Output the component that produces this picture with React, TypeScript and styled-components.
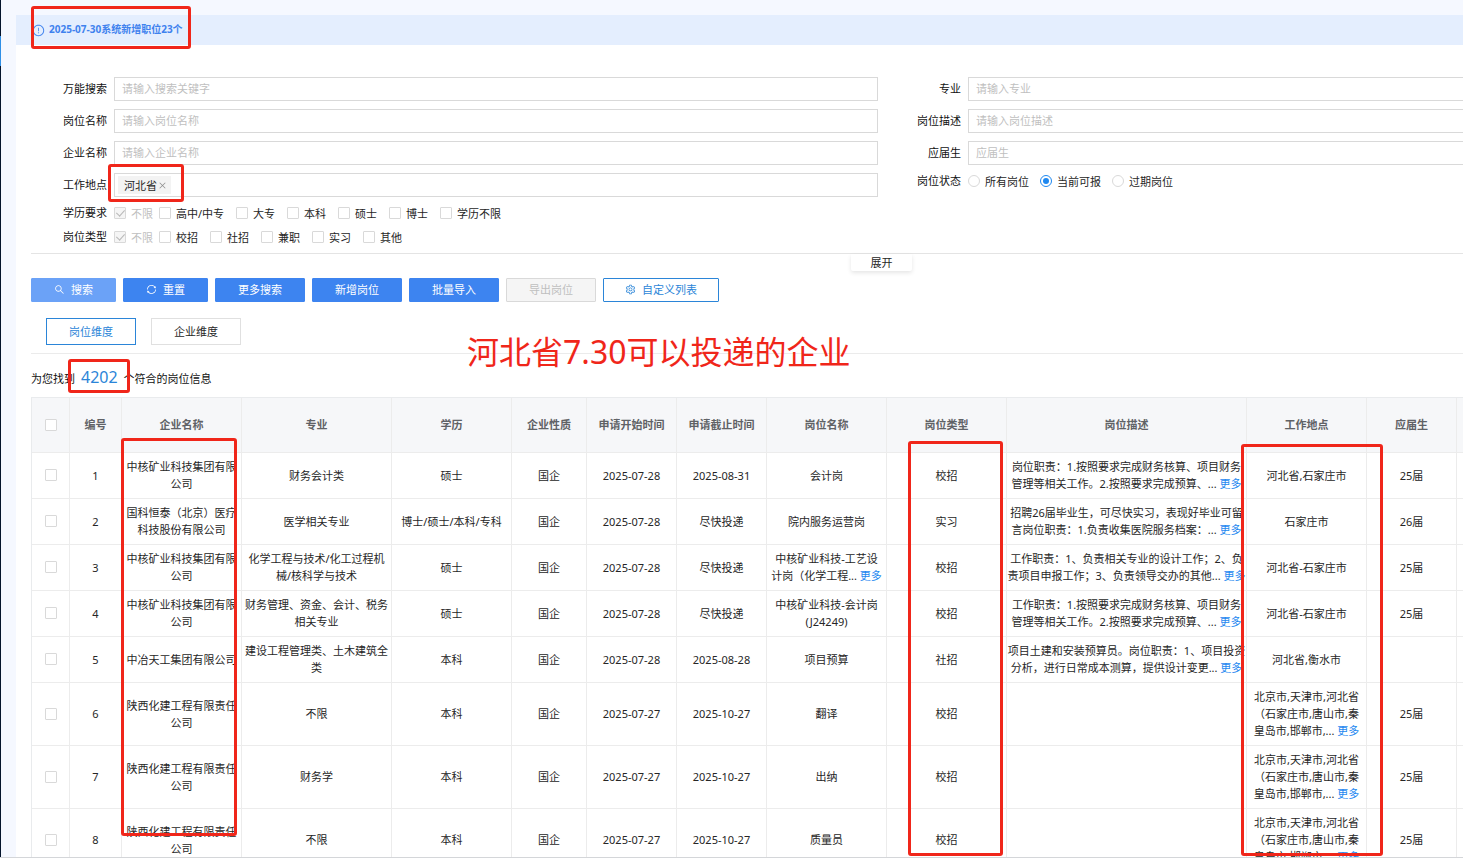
import React from 'react';
import styled, { createGlobalStyle, css } from 'styled-components';
import {
  AiOutlineClose,
  AiOutlineExclamationCircle,
  AiOutlineSearch,
  AiOutlineSetting,
  AiOutlineSync,
} from 'react-icons/ai';

const GlobalStyle = createGlobalStyle`
  * { box-sizing: border-box; }
  body {
    margin: 0;
    background: #f5f8ff;
    color: #262626;
    font-family: "Noto Sans", "Noto Sans CJK SC", sans-serif;
    font-size: 11px;
    line-height: 17px;
  }
  button, input { font: inherit; color: inherit; }
`;

const Shell = styled.div`
  position: relative;
  display: flex;
  height: 100vh;
  overflow: hidden;
  border-bottom: 1px solid #d4d6d9;
`;

const Rail = styled.nav`
  flex: 0 0 1px;
  padding-top: 36px;
  background: #04142b;
`;

const RailActive = styled.div`
  height: 30px;
  background: #2f8fe6;
`;

const Main = styled.main`
  flex: 1;
  min-width: 0;
  padding: 15px 0 0 15px;
  overflow: hidden;
`;

const Panel = styled.div`
  min-width: 1731px;
  background: #fff;
`;

const Notice = styled.div`
  display: flex;
  align-items: center;
  gap: 4px;
  height: 30px;
  padding: 0 16px;
  background: #e4eefe;
  color: #3f82ee;
  font-size: 10px;
  font-weight: 700;

  svg { width: 13px; height: 13px; }
`;

const NoticeText = styled.span`
  padding-bottom: 2px;
`;

const Content = styled.div`
  padding: 28px 15px 0;
`;

const Form = styled.form`
  display: grid;
  grid-template-columns: 1fr 1fr;
  column-gap: 7px;
  padding-bottom: 4px;
  border-bottom: 1px solid #e4e4e4;
`;

const FormColumn = styled.div`
  display: flex;
  flex-direction: column;
`;

const Field = styled.div<{ $choice?: boolean }>`
  display: grid;
  grid-template-columns: 76px 1fr;
  column-gap: 7px;
  align-items: center;
  height: ${(p) => (p.$choice ? 24 : 32)}px;
`;

const labelText = css`
  padding-bottom: 1px;
  color: #111;
  text-align: right;
  white-space: nowrap;
`;
const Label = styled.label`${labelText}`;
const GroupLabel = styled.span`${labelText}`;

const TextInput = styled.input`
  width: 100%;
  height: 24px;
  padding: 0 7px 2px;
  border: 1px solid #d9d9d9;
  background: #fff;
  outline: none;

  &::placeholder { color: #bfbfbf; opacity: 1; }
`;

const TagBox = styled.div`
  display: flex;
  align-items: center;
  height: 24px;
  padding: 0 3px;
  border: 1px solid #d9d9d9;
`;

const Tag = styled.span`
  display: flex;
  align-items: center;
  gap: 1px;
  height: 18px;
  padding: 0 4px 0 6px;
  background: #f3f3f3;
`;

const TagClose = styled.button`
  display: flex;
  padding: 0;
  border: 0;
  background: none;
  color: #8c8c8c;

  svg { width: 9px; height: 9px; }
`;

const TagInput = styled.input`
  flex: 1;
  min-width: 0;
  border: 0;
  background: none;
  outline: none;
`;

const Choices = styled.div<{ $gap: number }>`
  display: flex;
  align-items: center;
  gap: ${(p) => p.$gap}px;
`;

const Choice = styled.label<{ $muted?: boolean }>`
  display: flex;
  align-items: center;
  gap: 5px;
  white-space: nowrap;
  color: ${(p) => (p.$muted ? '#bfbfbf' : '#262626')};
  margin-right: ${(p) => (p.$muted ? -6 : 0)}px;
`;

const Checkbox = styled.input.attrs({ type: 'checkbox' })`
  appearance: none;
  display: grid;
  place-items: center;
  width: 12px;
  height: 12px;
  margin: 0;
  border: 1px solid #d9d9d9;
  border-radius: 1px;
  background: #fff;

  &:disabled { background: #f5f5f5; }
  &:checked::after {
    content: '';
    width: 4px;
    height: 7px;
    margin-bottom: 2px;
    border: solid #b8b8b8;
    border-width: 0 1px 1px 0;
    transform: rotate(42deg);
  }
`;

const Radio = styled.input.attrs({ type: 'radio' })`
  appearance: none;
  display: grid;
  place-items: center;
  width: 12px;
  height: 12px;
  margin: 0;
  border: 1px solid #d9d9d9;
  border-radius: 50%;
  background: #fff;

  &:checked { border-color: #1e88f0; }
  &:checked::after {
    content: '';
    width: 6px;
    height: 6px;
    border-radius: 50%;
    background: #1e88f0;
  }
`;

const ExpandRow = styled.div`
  display: flex;
  justify-content: center;
`;

const ExpandButton = styled.button`
  width: 61px;
  height: 17px;
  padding: 0;
  border: 0;
  border-radius: 0 0 2px 2px;
  background: #fff;
  box-shadow: 0 2px 4px rgba(0, 0, 0, 0.1);
  line-height: 17px;
`;

const Actions = styled.div`
  display: flex;
  gap: 7px;
  padding-top: 7px;
`;

type Tone = 'soft' | 'primary' | 'disabled' | 'outline';

const tones = {
  soft: css`border-color: #6ba2f7; background: #6ba2f7; color: #fff;`,
  primary: css`border-color: #3d84f0; background: #3d84f0; color: #fff;`,
  disabled: css`border-color: #d9d9d9; background: #f5f5f5; color: #bfbfbf;`,
  outline: css`border-color: #2b85d8; background: #fff; color: #2b85d8;`,
};

const ActionButton = styled.button<{ $tone: Tone; $width: number }>`
  display: flex;
  align-items: center;
  justify-content: center;
  gap: 6px;
  width: ${(p) => p.$width}px;
  height: 24px;
  padding: 0 0 2px;
  border: 1px solid;
  border-radius: 1px;
  white-space: nowrap;
  ${(p) => tones[p.$tone]}

  svg { width: 11px; height: 11px; }
`;

const Tabs = styled.div`
  display: flex;
  gap: 15px;
  padding: 16px 15px 8px;
  border-bottom: 1px solid #ebebeb;
`;

const Tab = styled.button<{ $active?: boolean }>`
  width: 90px;
  height: 27px;
  padding: 0;
  border: 1px solid ${(p) => (p.$active ? '#2b85d8' : '#e0e0e0')};
  background: #fff;
  color: ${(p) => (p.$active ? '#2b85d8' : '#262626')};
`;

const Summary = styled.p`
  display: flex;
  align-items: baseline;
  height: 43px;
  margin: 0;
  padding-top: 11px;
  color: #111;
  line-height: 24px;
`;

const Count = styled.span`
  padding: 0 6px;
  color: #2b85d8;
  font-size: 16px;
`;

const Table = styled.table`
  width: 100%;
  table-layout: fixed;
  border-collapse: separate;
  border-spacing: 0;
  border: solid #e9ebed;
  border-width: 1px 0 0 1px;
`;

const cell = css`
  padding: 5px 0 6px;
  border: solid #ececec;
  border-width: 0 1px 1px 0;
  text-align: center;
  vertical-align: middle;
  white-space: nowrap;
`;

const HeadCell = styled.th`
  ${cell}
  height: 55px;
  background: #f6f7f9;
  color: #606266;
  font-weight: 600;
`;

const Cell = styled.td`
  ${cell}
  height: 46px;

  input { margin: 0 auto; }
`;

const HeadCheck = styled(Checkbox)`
  margin: 0 auto;
`;

const Line = styled.div``;

const More = styled.a`
  color: #1e88f0;
  text-decoration: none;
`;

const Marker = styled.div<{ $x: number; $y: number; $w: number; $h: number }>`
  position: absolute;
  left: ${(p) => p.$x}px;
  top: ${(p) => p.$y}px;
  width: ${(p) => p.$w}px;
  height: ${(p) => p.$h}px;
  border: 3px solid #f0261a;
  border-radius: 3px;
  pointer-events: none;
`;

const Caption = styled.div`
  position: absolute;
  left: 467px;
  top: 330px;
  color: #f0261a;
  font-size: 32px;
  line-height: 44px;
  white-space: nowrap;
  pointer-events: none;
`;

const columns: { title: string; width?: number }[] = [
  { title: '编号', width: 52 },
  { title: '企业名称', width: 120 },
  { title: '专业', width: 150 },
  { title: '学历', width: 120 },
  { title: '企业性质', width: 75 },
  { title: '申请开始时间', width: 90 },
  { title: '申请截止时间', width: 90 },
  { title: '岗位名称', width: 120 },
  { title: '岗位类型', width: 120 },
  { title: '岗位描述', width: 240 },
  { title: '工作地点', width: 120 },
  { title: '应届生', width: 90 },
];

// A line break splits a cell's text; a trailing "…" marks shortened text with a link to the rest.
const zhonghe = '中核矿业科技集团有限\n公司';
const shanxi = '陕西化建工程有限责任\n公司';
const cities = '北京市,天津市,河北省\n（石家庄市,唐山市,秦\n皇岛市,邯郸市,…';
const finance = '1.按照要求完成财务核算、项目财务\n管理等相关工作。2.按照要求完成预算、…';

const rows: string[][] = [
  ['1', zhonghe, '财务会计类', '硕士', '国企', '2025-07-28', '2025-08-31', '会计岗', '校招', `岗位职责：${finance}`, '河北省,石家庄市', '25届'],
  ['2', '国科恒泰（北京）医疗\n科技股份有限公司', '医学相关专业', '博士/硕士/本科/专科', '国企', '2025-07-28', '尽快投递', '院内服务运营岗', '实习', '招聘26届毕业生，可尽快实习，表现好毕业可留\n言岗位职责：1.负责收集医院服务档案：…', '石家庄市', '26届'],
  ['3', zhonghe, '化学工程与技术/化工过程机\n械/核科学与技术', '硕士', '国企', '2025-07-28', '尽快投递', '中核矿业科技-工艺设\n计岗（化学工程…', '校招', '工作职责：1、负责相关专业的设计工作；2、负\n责项目申报工作；3、负责领导交办的其他…', '河北省-石家庄市', '25届'],
  ['4', zhonghe, '财务管理、资金、会计、税务\n相关专业', '硕士', '国企', '2025-07-28', '尽快投递', '中核矿业科技-会计岗\n(J24249)', '校招', `工作职责：${finance}`, '河北省-石家庄市', '25届'],
  ['5', '中冶天工集团有限公司', '建设工程管理类、土木建筑全\n类', '本科', '国企', '2025-07-28', '2025-08-28', '项目预算', '社招', '项目土建和安装预算员。岗位职责：1、项目投资\n分析，进行日常成本测算，提供设计变更…', '河北省,衡水市', ''],
  ['6', shanxi, '不限', '本科', '国企', '2025-07-27', '2025-10-27', '翻译', '校招', '', cities, '25届'],
  ['7', shanxi, '财务学', '本科', '国企', '2025-07-27', '2025-10-27', '出纳', '校招', '', cities, '25届'],
  ['8', shanxi, '不限', '本科', '国企', '2025-07-27', '2025-10-27', '质量员', '校招', '', cities, '25届'],
];

function CellText({ text }: { text: string }) {
  return (
    <>
      {text.split('\n').map((line, i) =>
        line.endsWith('…') ? (
          <Line key={i}>
            {line.slice(0, -1)}... <More href="#more">更多</More>
          </Line>
        ) : (
          <Line key={i}>{line}</Line>
        ),
      )}
    </>
  );
}

function InputField({ id, label, placeholder }: { id: string; label: string; placeholder: string }) {
  return (
    <Field>
      <Label htmlFor={id}>{label}</Label>
      <TextInput id={id} placeholder={placeholder} />
    </Field>
  );
}

function CheckField({ label, options }: { label: string; options: string[] }) {
  return (
    <Field $choice role="group" aria-label={label}>
      <GroupLabel>{label}</GroupLabel>
      <Choices $gap={12}>
        <Choice $muted>
          <Checkbox defaultChecked disabled />
          不限
        </Choice>
        {options.map((option) => (
          <Choice key={option}>
            <Checkbox />
            {option}
          </Choice>
        ))}
      </Choices>
    </Field>
  );
}

export default function App() {
  return (
    <Shell>
      <GlobalStyle />
      <Rail>
        <RailActive />
      </Rail>
      <Main>
        <Panel>
          <Notice>
            <AiOutlineExclamationCircle />
            <NoticeText>2025-07-30系统新增职位23个</NoticeText>
          </Notice>
          <Content>
            <Form onSubmit={(e) => e.preventDefault()}>
              <FormColumn>
                <InputField id="keyword" label="万能搜索" placeholder="请输入搜索关键字" />
                <InputField id="post" label="岗位名称" placeholder="请输入岗位名称" />
                <InputField id="company" label="企业名称" placeholder="请输入企业名称" />
                <Field>
                  <Label htmlFor="place">工作地点</Label>
                  <TagBox>
                    <Tag>
                      河北省
                      <TagClose type="button" aria-label="移除河北省">
                        <AiOutlineClose />
                      </TagClose>
                    </Tag>
                    <TagInput id="place" />
                  </TagBox>
                </Field>
                <CheckField label="学历要求" options={['高中/中专', '大专', '本科', '硕士', '博士', '学历不限']} />
                <CheckField label="岗位类型" options={['校招', '社招', '兼职', '实习', '其他']} />
              </FormColumn>
              <FormColumn>
                <InputField id="major" label="专业" placeholder="请输入专业" />
                <InputField id="description" label="岗位描述" placeholder="请输入岗位描述" />
                <InputField id="graduate" label="应届生" placeholder="应届生" />
                <Field $choice role="radiogroup" aria-label="岗位状态">
                  <GroupLabel>岗位状态</GroupLabel>
                  <Choices $gap={11}>
                    {['所有岗位', '当前可报', '过期岗位'].map((option) => (
                      <Choice key={option}>
                        <Radio name="status" defaultChecked={option === '当前可报'} />
                        {option}
                      </Choice>
                    ))}
                  </Choices>
                </Field>
              </FormColumn>
            </Form>
            <ExpandRow>
              <ExpandButton type="button">展开</ExpandButton>
            </ExpandRow>
            <Actions>
              <ActionButton $tone="soft" $width={85}>
                <AiOutlineSearch />
                搜索
              </ActionButton>
              <ActionButton $tone="primary" $width={85}>
                <AiOutlineSync />
                重置
              </ActionButton>
              <ActionButton $tone="primary" $width={90}>更多搜索</ActionButton>
              <ActionButton $tone="primary" $width={90}>新增岗位</ActionButton>
              <ActionButton $tone="primary" $width={90}>批量导入</ActionButton>
              <ActionButton $tone="disabled" $width={90} disabled>导出岗位</ActionButton>
              <ActionButton $tone="outline" $width={116}>
                <AiOutlineSetting />
                自定义列表
              </ActionButton>
            </Actions>
            <Tabs>
              <Tab $active>岗位维度</Tab>
              <Tab>企业维度</Tab>
            </Tabs>
            <Summary>
              为您找到<Count>4202</Count>个符合的岗位信息
            </Summary>
            <Table>
              <colgroup>
                <col width={38} />
                {columns.map((c) => (
                  <col key={c.title} width={c.width} />
                ))}
                <col />
              </colgroup>
              <thead>
                <tr>
                  <HeadCell>
                    <HeadCheck aria-label="全选" />
                  </HeadCell>
                  {columns.map((c) => (
                    <HeadCell key={c.title}>{c.title}</HeadCell>
                  ))}
                  <HeadCell />
                </tr>
              </thead>
              <tbody>
                {rows.map((row) => (
                  <tr key={row[0]}>
                    <Cell>
                      <Checkbox aria-label={`选择第${row[0]}行`} />
                    </Cell>
                    {row.map((text, i) => (
                      <Cell key={columns[i].title}>
                        <CellText text={text} />
                      </Cell>
                    ))}
                    <Cell />
                  </tr>
                ))}
              </tbody>
            </Table>
          </Content>
        </Panel>
      </Main>
      <Marker $x={31} $y={6} $w={160} $h={43} />
      <Marker $x={108} $y={164} $w={76} $h={38} />
      <Marker $x={68} $y={359} $w={62} $h={34} />
      <Marker $x={121} $y={438} $w={116} $h={398} />
      <Marker $x={908} $y={441} $w={95} $h={415} />
      <Marker $x={1241} $y={444} $w={142} $h={412} />
      <Caption>河北省7.30可以投递的企业</Caption>
    </Shell>
  );
}
